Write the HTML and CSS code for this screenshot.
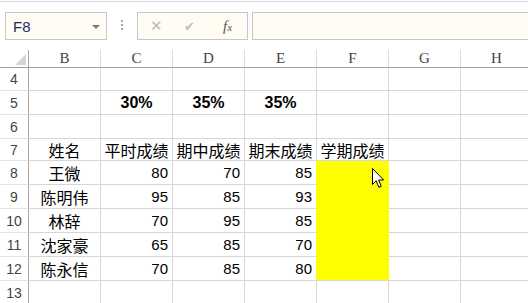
FILE: index.html
```html
<!DOCTYPE html>
<html lang="zh-CN">
<head>
    <meta charset="UTF-8">
    <title>学期成绩</title>
    <link rel="stylesheet" href="styles.css">
</head>
<body>
    <div class="toolbar">
        <div class="name-box">
            <span class="name-text">F8</span>
            <span class="name-arrow"></span>
        </div>
        <div class="grip"><i></i><i></i><i></i></div>
        <div class="fx-buttons">
            <span class="fx-btn cancel">&#x2715;</span>
            <span class="fx-btn enter">&#x2714;</span>
            <span class="fx-btn fx">f<sub>x</sub></span>
        </div>
        <div class="formula-bar"></div>
    </div>

    <div class="sheet">
        <!-- 列标题 -->
        <div class="corner"></div>
        <div class="col-head">B</div>
        <div class="col-head">C</div>
        <div class="col-head">D</div>
        <div class="col-head">E</div>
        <div class="col-head">F</div>
        <div class="col-head">G</div>
        <div class="col-head">H</div>

        <div class="row-head">4</div>
        <div class="cell"></div><div class="cell"></div><div class="cell"></div><div class="cell"></div><div class="cell"></div><div class="cell"></div><div class="cell"></div>

        <div class="row-head">5</div>
        <div class="cell"></div>
        <div class="cell center bold">30%</div>
        <div class="cell center bold">35%</div>
        <div class="cell center bold">35%</div>
        <div class="cell"></div><div class="cell"></div><div class="cell"></div>

        <div class="row-head">6</div>
        <div class="cell"></div><div class="cell"></div><div class="cell"></div><div class="cell"></div><div class="cell"></div><div class="cell"></div><div class="cell"></div>

        <div class="row-head">7</div>
        <div class="cell center">姓名</div>
        <div class="cell center">平时成绩</div>
        <div class="cell center">期中成绩</div>
        <div class="cell center">期末成绩</div>
        <div class="cell center">学期成绩</div>
        <div class="cell"></div><div class="cell"></div>

        <div class="row-head">8</div>
        <div class="cell center">王微</div>
        <div class="cell num">80</div>
        <div class="cell num">70</div>
        <div class="cell num before-fill">85</div>
        <div class="cell fill"></div>
        <div class="cell"></div><div class="cell"></div>

        <div class="row-head">9</div>
        <div class="cell center">陈明伟</div>
        <div class="cell num">95</div>
        <div class="cell num">85</div>
        <div class="cell num before-fill">93</div>
        <div class="cell fill"></div>
        <div class="cell"></div><div class="cell"></div>

        <div class="row-head">10</div>
        <div class="cell center">林辞</div>
        <div class="cell num">70</div>
        <div class="cell num">95</div>
        <div class="cell num before-fill">85</div>
        <div class="cell fill"></div>
        <div class="cell"></div><div class="cell"></div>

        <div class="row-head">11</div>
        <div class="cell center">沈家豪</div>
        <div class="cell num">65</div>
        <div class="cell num">85</div>
        <div class="cell num before-fill">70</div>
        <div class="cell fill"></div>
        <div class="cell"></div><div class="cell"></div>

        <div class="row-head">12</div>
        <div class="cell center">陈永信</div>
        <div class="cell num">70</div>
        <div class="cell num">85</div>
        <div class="cell num before-fill">80</div>
        <div class="cell fill last"></div>
        <div class="cell"></div><div class="cell"></div>

        <div class="row-head">13</div>
        <div class="cell"></div><div class="cell"></div><div class="cell"></div><div class="cell"></div><div class="cell"></div><div class="cell"></div><div class="cell"></div>
    </div>

    <svg class="cursor" width="13" height="21" viewBox="0 0 13 21">
        <path d="M0.5 0.5 L0.5 16.5 L4.2 12.8 L6.8 19.3 L9.2 18.3 L6.6 12 L11.6 12 Z" fill="#fff" stroke="#000" stroke-width="1" stroke-linejoin="round"/>
    </svg>
</body>
</html>
```

FILE: styles.css
```css
body {
    margin: 0;
    width: 528px;
    height: 303px;
    overflow: hidden;
    background-color: #fff;
    font-family: 'Liberation Sans', 'Noto Sans CJK SC', sans-serif;
    color: #000;
    position: relative;
}

/* 编辑栏 */
.toolbar {
    height: 49px;
    margin-top: 1px;
    border-top: 1px solid #d6d6d6;
    box-sizing: border-box;
    display: flex;
    align-items: flex-start;
    padding: 10px 0 0 5px;
    overflow: hidden;
}

.name-box {
    width: 102px;
    height: 28px;
    box-sizing: border-box;
    border: 1px solid #c6c6c6;
    background-color: #fffcf4;
    display: flex;
    align-items: center;
    justify-content: space-between;
    padding: 0 6px 0 7px;
    flex-shrink: 0;
}

.name-text {
    font-size: 15px;
    color: #1c2b5e;
}

.name-arrow {
    width: 0;
    height: 0;
    border-left: 4px solid transparent;
    border-right: 4px solid transparent;
    border-top: 4px solid #7a7a7a;
    margin-top: 1px;
}

.grip {
    width: 2px;
    margin: 8px 0 0 14px;
    display: flex;
    flex-direction: column;
    gap: 2px;
    flex-shrink: 0;
}

.grip i {
    display: block;
    width: 2px;
    height: 2px;
    background-color: #a8a8a8;
}

.fx-buttons {
    width: 111px;
    height: 28px;
    box-sizing: border-box;
    margin-left: 14px;
    border: 1px solid #c6c6c6;
    background-color: #fffcf4;
    display: flex;
    align-items: center;
    padding-left: 12px;
    flex-shrink: 0;
}

.fx-btn {
    color: #bdbdbd;
    font-size: 15px;
}

.fx-btn.enter {
    margin-left: 21px;
    font-size: 13px;
}

.fx-btn.fx {
    margin-left: 28px;
    color: #555;
    font-family: 'Liberation Serif', serif;
    font-style: italic;
    font-size: 15px;
}

.fx-btn.fx sub {
    font-size: 11px;
    vertical-align: baseline;
}

.formula-bar {
    width: 300px;
    height: 28px;
    box-sizing: border-box;
    margin-left: 4px;
    border: 1px solid #c6c6c6;
    background-color: #fffcf4;
    flex-shrink: 0;
}

/* 工作表 */
.sheet {
    display: grid;
    grid-template-columns: 29px repeat(7, 72px);
    grid-template-rows: 18px 23px 24px 24px 22px 24px 24px 24px 24px 24px 24px;
}

.sheet > div {
    box-sizing: border-box;
    border-right: 1px solid #d6d6d6;
    border-bottom: 1px solid #d6d6d6;
    display: flex;
    align-items: center;
}

.corner {
    justify-content: flex-end;
    align-items: flex-end !important;
    border-right-color: #a6a6a6 !important;
    border-bottom-color: #a0a0a0 !important;
    padding: 0 2px 2px 0;
}

.corner::after {
    content: '';
    width: 0;
    height: 0;
    border-left: 11px solid transparent;
    border-bottom: 11px solid #d4d4d4;
}

.col-head {
    justify-content: center;
    font-family: 'Liberation Serif', serif;
    font-size: 15px;
    color: #444;
    border-right-color: #dcdcdc !important;
    border-bottom-color: #a0a0a0 !important;
}

.row-head {
    justify-content: center;
    font-size: 14px;
    color: #444;
    border-right-color: #a6a6a6 !important;
    border-bottom-color: #e2e2e2 !important;
}

.cell {
    font-size: 15px;
    padding: 0 4px;
    white-space: nowrap;
}

.center {
    justify-content: center;
    font-size: 16px;
}

.bold {
    font-weight: bold;
}

.num {
    justify-content: flex-end;
    font-size: 15px;
}

.fill {
    background-color: #ffff00;
    border-bottom-color: #ffff00 !important;
    border-right-color: #ffff00 !important;
}

.fill.last {
    border-bottom-color: #d6d6d6 !important;
}

.before-fill {
    border-right-color: #ffff00 !important;
}

.cursor {
    position: absolute;
    left: 372px;
    top: 168px;
}
```
